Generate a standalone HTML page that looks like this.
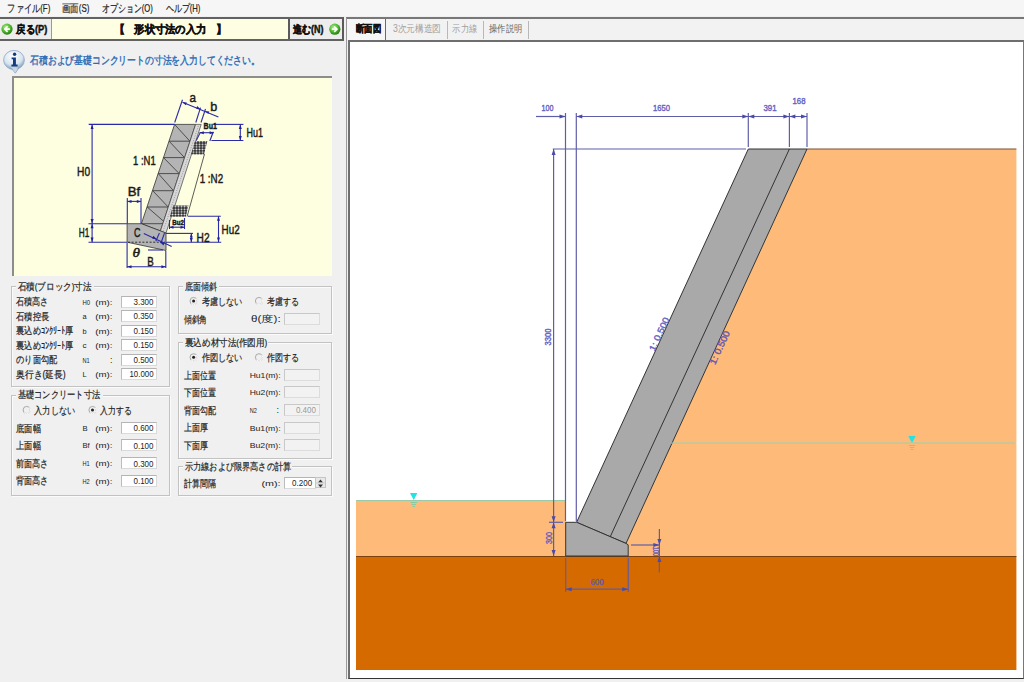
<!DOCTYPE html>
<html><head><meta charset="utf-8">
<style>
*{margin:0;padding:0;box-sizing:border-box}
html,body{width:1024px;height:682px;overflow:hidden;background:#F0F0F0;font-family:"Liberation Sans",sans-serif;font-size:11px;color:#222;position:relative}
.a{position:absolute}
.gb{position:absolute;border:1px solid #C2C2C2;box-shadow:1px 1px 0 #FBFBFB inset, 1px 1px 0 #FBFBFB}
.gbt{position:absolute;top:-2px;height:3px;background:#F0F0F0}
.inp{position:absolute;background:#fff;border:1px solid #DADADA;border-top-color:#B4B4B4;border-left-color:#BCBCBC;height:12px}
.dis{background:#F2F2F2;border-color:#DCDCDC;border-top-color:#C8C8C8;border-left-color:#C8C8C8}
</style></head><body>
<div class="a" style="left:0;top:0;width:1024px;height:16px;background:#F6F6F6"></div>
<div class="a" style="left:0;top:17px;width:344px;height:24px;border-top:2px solid #626262;border-bottom:2px solid #626262;border-right:2px solid #5A5A5A;background:#EDEDED"></div>
<div class="a" style="left:51px;top:19px;width:239px;height:20px;background:#FEFEE2;border-left:1px solid #9A9A9A;border-right:2px solid #5A5A5A"></div>
<div class="a" style="left:346px;top:17px;width:678px;height:662px;border-top:2px solid #787878;border-left:1px solid #9A9A9A;background:#F0F0F0"></div>
<div class="a" style="left:347px;top:19px;width:677px;height:21px;background:#F2F2F2"></div>
<div class="a" style="left:347px;top:19px;width:39px;height:21px;background:#F6F6F6;border-right:1px solid #6A6A6A"></div>
<div class="a" style="left:447px;top:21px;width:1px;height:18px;background:#B8B8B8"></div>
<div class="a" style="left:483px;top:21px;width:1px;height:18px;background:#B8B8B8"></div>
<div class="a" style="left:528px;top:21px;width:1px;height:18px;background:#B8B8B8"></div>
<div class="a" style="left:348px;top:40px;width:676px;height:639px;background:#fff;border-left:2px solid #6E6E6E;border-top:2px solid #6E6E6E;border-bottom:1px solid #333;border-right:1px solid #777"></div>
<div class="a" style="left:12px;top:76px;width:320px;height:200px;background:#FEFEE0;border-top:2px solid #8D8D8D;border-left:2px solid #8D8D8D"></div>
<div class="gb" style="left:11px;top:286px;width:159px;height:101px"><div class="gbt" style="left:3.5px;width:78.5px"></div></div>
<div class="gb" style="left:11px;top:395px;width:159px;height:101px"><div class="gbt" style="left:3.5px;width:87px"></div></div>
<div class="gb" style="left:178px;top:286px;width:154px;height:48px"><div class="gbt" style="left:3.5px;width:36.5px"></div></div>
<div class="gb" style="left:178px;top:342px;width:154px;height:117px"><div class="gbt" style="left:3.5px;width:85px"></div></div>
<div class="gb" style="left:178px;top:466px;width:154px;height:30px"><div class="gbt" style="left:3.5px;width:109px"></div></div>
<div class="inp" style="left:120.5px;top:295.5px;width:36px"></div>
<div class="inp" style="left:120.5px;top:310.0px;width:36px"></div>
<div class="inp" style="left:120.5px;top:324.5px;width:36px"></div>
<div class="inp" style="left:120.5px;top:339.0px;width:36px"></div>
<div class="inp" style="left:120.5px;top:353.5px;width:36px"></div>
<div class="inp" style="left:120.5px;top:368.0px;width:36px"></div>
<div class="inp" style="left:120.5px;top:422.0px;width:36px"></div>
<div class="inp" style="left:120.5px;top:439.4px;width:36px"></div>
<div class="inp" style="left:120.5px;top:457.3px;width:36px"></div>
<div class="inp" style="left:120.5px;top:474.5px;width:36px"></div>
<div class="inp dis" style="left:283.5px;top:313.2px;width:36px"></div>
<div class="inp dis" style="left:283.5px;top:368.9px;width:36px"></div>
<div class="inp dis" style="left:283.5px;top:386.4px;width:36px"></div>
<div class="inp dis" style="left:283.5px;top:404.0px;width:36px"></div>
<div class="inp dis" style="left:283.5px;top:421.5px;width:36px"></div>
<div class="inp dis" style="left:283.5px;top:439.0px;width:36px"></div>
<div class="inp" style="left:283.5px;top:477px;width:32px"></div>
<div class="a" style="left:315.3px;top:477px;width:10.5px;height:11px;background:#E8E8E8;border:1px solid #C4C4C4"></div>
<svg class="a" style="left:0;top:0" width="1024" height="682" viewBox="0 0 1024 682">
<defs>
<radialGradient id="gg" cx="40%" cy="35%" r="65%"><stop offset="0" stop-color="#B8F08A"/><stop offset=".6" stop-color="#4CB82E"/><stop offset="1" stop-color="#2A7A18"/></radialGradient>
<radialGradient id="ig" cx="45%" cy="30%" r="70%"><stop offset="0" stop-color="#FFFFFF"/><stop offset=".65" stop-color="#D8E4F0"/><stop offset="1" stop-color="#7A9CC0"/></radialGradient>
</defs>
<!-- icons -->
<g transform="translate(0.5,22.6)"><circle cx="6.5" cy="6.5" r="5.6" fill="url(#gg)"/><path d="M8.8 6.5H4.6M6.6 4.3L4.3 6.5L6.6 8.7" stroke="#fff" stroke-width="1.7" fill="none" stroke-linecap="round" stroke-linejoin="round"/></g>
<g transform="translate(328.3,22.7)"><circle cx="6.5" cy="6.5" r="5.6" fill="url(#gg)"/><path d="M4.2 6.5H8.4M6.4 4.3L8.7 6.5L6.4 8.7" stroke="#fff" stroke-width="1.7" fill="none" stroke-linecap="round" stroke-linejoin="round"/></g>
<g><path d="M10 66.5L15.3 73.2L19 67.8Z" fill="#C8D6E6" stroke="#8BA6C4" stroke-width=".8"/><ellipse cx="14" cy="60" rx="10.4" ry="9.6" fill="url(#ig)" stroke="#8BA6C4" stroke-width=".8"/><path d="M11 67L15.3 72.2L18.2 67.5Z" fill="#C8D6E6"/><circle cx="14.6" cy="54.2" r="1.7" fill="#143A80"/><path d="M11.6 57.4h4.3v7.2h1.7v1.9h-6.2v-1.9h1.6v-5.3h-1.4z" fill="#143A80"/></g>
<!-- spinner arrows -->
<path d="M318 482.5h5l-2.5-3z M318 484.5h5l-2.5 3z" fill="#333"/>
<line x1="315.5" y1="482.9" x2="325.5" y2="482.9" stroke="#C8C8C8" stroke-width="0.8"/>
<circle cx="26.7" cy="410" r="3.6" fill="none" stroke="#A0A0A0" stroke-width="0.9"/>
<path d="M29.3 407.4A3.6 3.6 0 0 1 24.099999999999998 412.6" fill="none" stroke="#FFFFFF" stroke-width="1"/>
<circle cx="92.5" cy="410" r="3.6" fill="none" stroke="#A0A0A0" stroke-width="0.9"/>
<path d="M95.1 407.4A3.6 3.6 0 0 1 89.9 412.6" fill="none" stroke="#FFFFFF" stroke-width="1"/>
<circle cx="92.5" cy="410" r="1.5" fill="#222"/>
<circle cx="193.6" cy="301" r="3.6" fill="none" stroke="#A0A0A0" stroke-width="0.9"/>
<path d="M196.2 298.4A3.6 3.6 0 0 1 191.0 303.6" fill="none" stroke="#FFFFFF" stroke-width="1"/>
<circle cx="193.6" cy="301" r="1.5" fill="#222"/>
<circle cx="259" cy="301" r="3.6" fill="none" stroke="#A0A0A0" stroke-width="0.9"/>
<path d="M261.6 298.4A3.6 3.6 0 0 1 256.4 303.6" fill="none" stroke="#FFFFFF" stroke-width="1"/>
<circle cx="193.6" cy="357.3" r="3.6" fill="none" stroke="#A0A0A0" stroke-width="0.9"/>
<path d="M196.2 354.7A3.6 3.6 0 0 1 191.0 359.90000000000003" fill="none" stroke="#FFFFFF" stroke-width="1"/>
<circle cx="193.6" cy="357.3" r="1.5" fill="#222"/>
<circle cx="259" cy="357.3" r="3.6" fill="none" stroke="#A0A0A0" stroke-width="0.9"/>
<path d="M261.6 354.7A3.6 3.6 0 0 1 256.4 359.90000000000003" fill="none" stroke="#FFFFFF" stroke-width="1"/>
<g id="left">
 <!-- block (stone masonry) -->
 <polygon points="174.6,124.4 195.6,124.4 160.4,231 141.4,223.7" fill="#B4B4B4" stroke="#333" stroke-width="0.8"/>
 <line x1="141.4" y1="223.7" x2="163" y2="223.7" stroke="#333" stroke-width="0.8"/>
 <g stroke="#333" stroke-width="0.8">
  <line x1="169.1" y1="141.2" x2="189.9" y2="141.2"/>
  <line x1="163.5" y1="157.6" x2="184.5" y2="157.6"/>
  <line x1="158.3" y1="173.6" x2="179.2" y2="173.6"/>
  <line x1="152.7" y1="190.7" x2="173.5" y2="190.7"/>
  <line x1="147.2" y1="207" x2="168.2" y2="207"/>
  <line x1="174.6" y1="124.4" x2="189.9" y2="141.2"/>
  <line x1="169.1" y1="141.2" x2="184.5" y2="157.6"/>
  <line x1="163.5" y1="157.6" x2="179.2" y2="173.6"/>
  <line x1="158.3" y1="173.6" x2="173.5" y2="190.7"/>
  <line x1="152.7" y1="190.7" x2="168.2" y2="207"/>
  <line x1="147.2" y1="207" x2="166.4" y2="223.7"/>
 </g>
 <!-- backfill concrete strip b -->
 <polygon points="195.6,124.4 201.2,124.4 166,233 160.4,231" fill="#D8D8D8" stroke="#444" stroke-width="0.7"/>
 <line x1="198.4" y1="126" x2="163.2" y2="231" stroke="#888" stroke-width="0.8" stroke-dasharray="1,1.5"/>
 <!-- footing -->
 <polygon points="127.1,223.7 141.4,223.7 166,233 166,250.5 127.1,242.2" fill="#B4B4B4" stroke="#333" stroke-width="0.8"/>
 <line x1="128" y1="242.2" x2="165" y2="242.2" stroke="#222" stroke-width="0.9" stroke-dasharray="2,1.6"/>
 <!-- backfill gravel -->
 <defs><pattern id="grv" patternUnits="userSpaceOnUse" width="3" height="2.6"><rect width="3" height="2.6" fill="#2A2A2A"/><ellipse cx="1.5" cy="1.3" rx="1.05" ry="0.8" fill="#E0E0E0"/></pattern></defs>
 <polygon points="195,141 207.4,141 204,154.6 191,154.6" fill="url(#grv)"/>
 <polygon points="173,205.5 188.5,205.5 185.8,216.8 169.8,216.8" fill="url(#grv)"/>
 <!-- N2 line -->
 <line x1="204.5" y1="154" x2="187.1" y2="216.5" stroke="#333" stroke-width="0.8"/>
 <!-- dimension lines -->
 <g stroke="#2A2AA8" stroke-width="1.1" fill="none">
  <line x1="88.7" y1="124.4" x2="174.6" y2="124.4"/>
  <line x1="92.1" y1="124.4" x2="92.1" y2="242.2"/>
  <line x1="88.5" y1="223.7" x2="127" y2="223.7"/>
  <line x1="88.5" y1="242.2" x2="127" y2="242.2"/>
  <line x1="165.8" y1="242.2" x2="221.2" y2="242.2"/>
  <line x1="165.8" y1="233.4" x2="193" y2="233.4"/>
  <line x1="191.3" y1="233.4" x2="191.3" y2="242.2"/>
  <line x1="188" y1="216.2" x2="220.8" y2="216.2"/>
  <line x1="218.5" y1="216.2" x2="218.5" y2="242.2"/>
  <line x1="213.75" y1="124.4" x2="243.4" y2="124.4"/>
  <line x1="211.4" y1="140.5" x2="243.4" y2="140.5"/>
  <line x1="240.3" y1="124.4" x2="240.3" y2="140.5"/>
  <line x1="127.3" y1="198" x2="127.3" y2="223.7"/>
  <line x1="141" y1="198" x2="141" y2="223.7"/>
  <line x1="127.3" y1="201.4" x2="141" y2="201.4"/>
  <line x1="127.1" y1="243" x2="127.1" y2="268"/>
  <line x1="165.8" y1="251" x2="165.8" y2="268"/>
  <line x1="127.1" y1="266.8" x2="165.8" y2="266.8"/>
  <line x1="174.7" y1="122.5" x2="182.5" y2="99.8"/>
  <line x1="195.8" y1="122.5" x2="200.5" y2="107.7"/>
  <line x1="201" y1="122.5" x2="205.5" y2="109"/>
  <line x1="182.5" y1="102.2" x2="218.4" y2="117"/>
  <line x1="199.7" y1="132.7" x2="213.75" y2="132.7"/>
  <line x1="213.3" y1="131.8" x2="209.8" y2="141"/>
  <line x1="200.4" y1="132.3" x2="196.3" y2="140.5"/>
  <line x1="169.5" y1="227.2" x2="184.5" y2="227.2"/>
  <line x1="169.5" y1="220" x2="169.5" y2="229"/>
  <line x1="184.5" y1="218" x2="184.5" y2="229"/>
  <line x1="143.8" y1="233.4" x2="171.7" y2="246.4"/>
  <line x1="159.4" y1="233" x2="155.8" y2="241.3"/>
  <line x1="164.5" y1="233" x2="160.9" y2="243.3"/>
  
  <line x1="148" y1="250" x2="163" y2="250"/>
 </g>
 <g fill="#2020A0">
  <polygon points="92.1,124.4 90.6,129 93.6,129"/>
  <polygon points="92.1,223.7 90.6,219 93.6,219"/>
  <polygon points="92.1,223.7 90.6,228.3 93.6,228.3"/>
  <polygon points="92.1,242.2 90.6,237.6 93.6,237.6"/>
  <polygon points="240.3,124.4 238.8,129 241.8,129"/>
  <polygon points="240.3,140.5 238.8,136 241.8,136"/>
  <polygon points="218.5,216.2 217,220.8 220,220.8"/>
  <polygon points="218.5,242.2 217,237.6 220,237.6"/>
  <polygon points="191.3,233.4 189.8,237.6 192.8,237.6"/>
  <polygon points="191.3,242.2 189.8,238 192.8,238"/>
  <polygon points="127.3,201.4 131.5,199.9 131.5,202.9"/>
  <polygon points="141,201.4 136.8,199.9 136.8,202.9"/>
  <polygon points="127.1,266.8 131.5,265.3 131.5,268.3"/>
  <polygon points="165.8,266.8 161.4,265.3 161.4,268.3"/>
  <polygon points="199.7,132.7 203.8,131.2 203.8,134.2"/>
  <polygon points="213.75,132.7 209.6,131.2 209.6,134.2"/>
  <polygon points="169.5,227.2 173.5,225.7 173.5,228.7"/>
  <polygon points="184.5,227.2 180.5,225.7 180.5,228.7"/>
  <polygon points="182.5,102.2 186.8,102.6 185.8,105.3"/>
  <polygon points="200.5,109.2 196.2,108.8 197.2,106.1"/>
  <polygon points="205,111 209.3,111.4 208.3,114.1"/>
  <polygon points="157,239.4 152.2,238.4 153.4,235.7"/>
  <polygon points="159.8,241.8 164.6,242.8 163.4,245.5"/>
 </g>
 <g font-family="Liberation Sans, sans-serif" fill="#1A1A1A" stroke="#1A1A1A" stroke-width="0.45">
  <text x="77.1" y="175.6" font-size="13" textLength="13" lengthAdjust="spacingAndGlyphs">H0</text>
  <text x="78.8" y="236.7" font-size="13" textLength="10.5" lengthAdjust="spacingAndGlyphs">H1</text>
  <text x="133.1" y="164.7" font-size="13" textLength="22.6" lengthAdjust="spacingAndGlyphs">1 :N1</text>
  <text x="199.7" y="183" font-size="13" textLength="23.4" lengthAdjust="spacingAndGlyphs">1 :N2</text>
  <text x="127.8" y="196.2" font-size="13" textLength="12.5" lengthAdjust="spacingAndGlyphs">Bf</text>
  <text x="246.6" y="136.7" font-size="13" textLength="16.4" lengthAdjust="spacingAndGlyphs">Hu1</text>
  <text x="221.6" y="233.9" font-size="13" textLength="18" lengthAdjust="spacingAndGlyphs">Hu2</text>
  <text x="196.6" y="242.3" font-size="13" textLength="13" lengthAdjust="spacingAndGlyphs">H2</text>
  <text x="147.3" y="265.6" font-size="13" textLength="6.5" lengthAdjust="spacingAndGlyphs">B</text>
  <text x="134" y="236.9" font-size="13" textLength="6.5" lengthAdjust="spacingAndGlyphs">C</text>
  <text x="189.5" y="102" font-size="13" textLength="6.5" lengthAdjust="spacingAndGlyphs">a</text>
  <text x="210.2" y="111" font-size="13" textLength="7" lengthAdjust="spacingAndGlyphs">b</text>
  <text x="132.4" y="257.2" font-size="12" font-style="italic" font-family="Liberation Serif, serif" textLength="7.5" lengthAdjust="spacingAndGlyphs">θ</text>
  <text x="203.6" y="128.8" font-size="9" font-weight="bold" textLength="13.3" lengthAdjust="spacingAndGlyphs">Bu1</text>
  <text x="172.3" y="224.8" font-size="7" font-weight="bold" textLength="11.7" lengthAdjust="spacingAndGlyphs">Bu2</text>
 </g>
</g>

<!-- right drawing -->
<g id="right">
 <!-- light orange: left of wall below water, and right of wall -->
 <rect x="356" y="500" width="210" height="57" fill="#FDBA78"/>
 <polygon points="807,149 1016.4,149 1016.4,557 628.2,557 628.2,544.8 626,543.4" fill="#FDBA78"/>
 <rect x="356" y="556.5" width="660.4" height="113.5" fill="#D46A00"/>
 <line x1="356" y1="556.5" x2="1016.4" y2="556.5" stroke="#7A400F" stroke-width="1.2"/>
 <line x1="807" y1="149" x2="1016.4" y2="149" stroke="#7A5030" stroke-width="1.2"/>
 <!-- wall -->
 <polygon points="748.3,149 807,149 626,543.4 576.6,522.3" fill="#A9A9A9" stroke="#333" stroke-width="1"/>
 <line x1="789.4" y1="149" x2="610" y2="537.2" stroke="#333" stroke-width="1"/>
 <!-- footing -->
 <polygon points="565.7,522.3 576.6,522.3 626,543.4 628.2,544.8 628.2,556 565.7,556" fill="#A9A9A9" stroke="#333" stroke-width="1"/>
 <!-- water lines -->
 <line x1="356" y1="500.5" x2="566" y2="500.5" stroke="#8CCCB0" stroke-width="0.9"/>
 <line x1="671" y1="443" x2="1015" y2="443" stroke="#8CD4B4" stroke-width="0.9"/>
 <polygon points="410,493 417.4,493 413.7,500" fill="#22E2E2"/>
 <line x1="410.5" y1="502.5" x2="417" y2="502.5" stroke="#8FC8A0" stroke-width="1"/>
 <line x1="411.5" y1="504.5" x2="416" y2="504.5" stroke="#8FC8A0" stroke-width="1"/>
 <line x1="412.5" y1="506.5" x2="415" y2="506.5" stroke="#8FC8A0" stroke-width="1"/>
 <polygon points="908.3,436 915.7,436 912,443" fill="#22E2E2"/>
 <line x1="908.8" y1="445.5" x2="915.3" y2="445.5" stroke="#8FC8A0" stroke-width="1"/>
 <line x1="909.8" y1="447.5" x2="914.3" y2="447.5" stroke="#8FC8A0" stroke-width="1"/>
 <line x1="910.8" y1="449.5" x2="913.3" y2="449.5" stroke="#8FC8A0" stroke-width="1"/>
 <!-- dimension lines -->
 <g stroke="#5E5EA8" stroke-width="1.2" fill="none">
  <line x1="536" y1="116.5" x2="565.5" y2="116.5"/>
  <line x1="576.3" y1="116.5" x2="807" y2="116.5"/>
  <line x1="565.5" y1="113" x2="565.5" y2="521"/>
  <line x1="576.3" y1="113" x2="576.3" y2="521"/>
  <line x1="748.3" y1="113" x2="748.3" y2="147"/>
  <line x1="789.4" y1="113" x2="789.4" y2="147"/>
  <line x1="807" y1="113" x2="807" y2="147"/>
  <line x1="552.8" y1="149" x2="746" y2="149"/>
  <line x1="553.6" y1="149" x2="553.6" y2="556"/>
  <line x1="549" y1="522.3" x2="563" y2="522.3"/>
  <line x1="565.7" y1="558" x2="565.7" y2="592"/>
  <line x1="628.2" y1="558" x2="628.2" y2="592"/>
  <line x1="565.7" y1="589.2" x2="628.2" y2="589.2"/>
  <line x1="631" y1="545" x2="660" y2="545"/>
  <line x1="659.4" y1="529" x2="659.4" y2="572.4"/>
 </g>
 <g fill="#4A4AA8">
  <polygon points="565.5,116.5 559.5,114.5 559.5,118.5"/>
  <polygon points="576.3,116.5 582.3,114.5 582.3,118.5"/>
  <polygon points="748.3,116.5 742.3,114.5 742.3,118.5"/>
  <polygon points="748.3,116.5 754.3,114.5 754.3,118.5"/>
  <polygon points="789.4,116.5 783.4,114.5 783.4,118.5"/>
  <polygon points="789.4,116.5 795.4,114.5 795.4,118.5"/>
  <polygon points="807.0,116.5 801.0,114.5 801.0,118.5"/>
  <polygon points="553.6,149.0 551.6,155.0 555.6,155.0"/>
  <polygon points="553.6,522.3 551.6,516.3 555.6,516.3"/>
  <polygon points="553.6,522.3 551.6,528.3 555.6,528.3"/>
  <polygon points="553.6,556.0 551.6,550.0 555.6,550.0"/>
  <polygon points="565.7,589.2 571.7,587.2 571.7,591.2"/>
  <polygon points="628.2,589.2 622.2,587.2 622.2,591.2"/>
  <polygon points="659.4,545.0 657.4,539.0 661.4,539.0"/>
  <polygon points="659.4,556.0 657.4,562.0 661.4,562.0"/>
  <polygon points="659.4,545.0 653.4,543.0 653.4,547.0"/>
 </g>
 <line x1="659.4" y1="556" x2="680" y2="556" stroke="#6B3A10" stroke-width="0"/>
 <g font-family="Liberation Sans, sans-serif" font-size="9" fill="#6464C4" stroke="#6464C4" stroke-width="0.4" text-anchor="middle">
  <text x="547.5" y="111" textLength="12" lengthAdjust="spacingAndGlyphs">100</text>
  <text x="661.6" y="111" textLength="17" lengthAdjust="spacingAndGlyphs">1650</text>
  <text x="770" y="111" textLength="13" lengthAdjust="spacingAndGlyphs">391</text>
  <text x="799" y="104" textLength="13" lengthAdjust="spacingAndGlyphs">168</text>
  <text x="597" y="584.5" textLength="13" lengthAdjust="spacingAndGlyphs" fill="#6A3C8A">600</text>
  <text transform="translate(551,337) rotate(-90)" x="0" y="0" textLength="17" lengthAdjust="spacingAndGlyphs">3300</text>
  <text transform="translate(551.5,538) rotate(-90)" x="0" y="0" textLength="12" lengthAdjust="spacingAndGlyphs" fill="#6A50A8">300</text>
  <text transform="translate(652.5,551.5) rotate(90)" x="0" y="0" textLength="9.5" lengthAdjust="spacingAndGlyphs" fill="#6A3C8A">100</text>
  <text transform="translate(662,335.5) rotate(-65)" x="0" y="0" textLength="36" lengthAdjust="spacingAndGlyphs">1: 0.500</text>
  <text transform="translate(722.5,349) rotate(-65)" x="0" y="0" textLength="36" lengthAdjust="spacingAndGlyphs" fill="#6A3C8A">1: 0.500</text>
 </g>
</g>

<g>
<text x="7.3" y="12.0" font-size="10.5" font-weight="normal" fill="#222" font-family="Liberation Sans, sans-serif" textLength="43.0" lengthAdjust="spacingAndGlyphs" stroke="#222" stroke-width="0.2">ファイル(F)</text>
<text x="62.0" y="12.0" font-size="10.5" font-weight="normal" fill="#222" font-family="Liberation Sans, sans-serif" textLength="27.4" lengthAdjust="spacingAndGlyphs" stroke="#222" stroke-width="0.2">画面(S)</text>
<text x="101.7" y="12.0" font-size="10.5" font-weight="normal" fill="#222" font-family="Liberation Sans, sans-serif" textLength="51.1" lengthAdjust="spacingAndGlyphs" stroke="#222" stroke-width="0.2">オプション(O)</text>
<text x="165.5" y="12.0" font-size="10.5" font-weight="normal" fill="#222" font-family="Liberation Sans, sans-serif" textLength="34.9" lengthAdjust="spacingAndGlyphs" stroke="#222" stroke-width="0.2">ヘルプ(H)</text>
<text x="16.4" y="33.4" font-size="11" font-weight="bold" fill="#111" font-family="Liberation Sans, sans-serif" textLength="30.9" lengthAdjust="spacingAndGlyphs" stroke="#111" stroke-width="0.45">戻る(P)</text>
<text x="114.0" y="33.4" font-size="11" font-weight="bold" fill="#111" font-family="Liberation Sans, sans-serif" textLength="11.0" lengthAdjust="spacingAndGlyphs" stroke="#111" stroke-width="0.45">【</text>
<text x="134.2" y="33.4" font-size="11" font-weight="bold" fill="#111" font-family="Liberation Sans, sans-serif" textLength="72.2" lengthAdjust="spacingAndGlyphs" stroke="#111" stroke-width="0.45">形状寸法の入力</text>
<text x="216.0" y="33.4" font-size="11" font-weight="bold" fill="#111" font-family="Liberation Sans, sans-serif" textLength="11.0" lengthAdjust="spacingAndGlyphs" stroke="#111" stroke-width="0.45">】</text>
<text x="293.0" y="33.4" font-size="11" font-weight="bold" fill="#111" font-family="Liberation Sans, sans-serif" textLength="30.4" lengthAdjust="spacingAndGlyphs" stroke="#111" stroke-width="0.45">進む(N)</text>
<text x="30.0" y="64.4" font-size="10.5" font-weight="normal" fill="#2468B4" font-family="Liberation Sans, sans-serif" textLength="229.8" lengthAdjust="spacingAndGlyphs" stroke="#2468B4" stroke-width="0.35">石積および基礎コンクリートの寸法を入力してください。</text>
<text x="356.0" y="32.1" font-size="10" font-weight="bold" fill="#111" font-family="Liberation Sans, sans-serif" textLength="24.9" lengthAdjust="spacingAndGlyphs" stroke="#111" stroke-width="0.45">断面図</text>
<text x="392.9" y="32.1" font-size="10" font-weight="normal" fill="#A0A0A0" font-family="Liberation Sans, sans-serif" textLength="48.3" lengthAdjust="spacingAndGlyphs">3次元構造図</text>
<text x="452.4" y="32.1" font-size="10" font-weight="normal" fill="#A0A0A0" font-family="Liberation Sans, sans-serif" textLength="24.7" lengthAdjust="spacingAndGlyphs">示力線</text>
<text x="489.0" y="32.1" font-size="10" font-weight="normal" fill="#666" font-family="Liberation Sans, sans-serif" textLength="33.0" lengthAdjust="spacingAndGlyphs">操作説明</text>
<text x="17.7" y="289.8" font-size="9.5" font-weight="normal" fill="#222" font-family="Liberation Sans, sans-serif" textLength="73.8" lengthAdjust="spacingAndGlyphs" stroke="#222" stroke-width="0.2">石積(ブロック)寸法</text>
<text x="17.7" y="398.4" font-size="9.5" font-weight="normal" fill="#222" font-family="Liberation Sans, sans-serif" textLength="82.4" lengthAdjust="spacingAndGlyphs" stroke="#222" stroke-width="0.2">基礎コンクリート寸法</text>
<text x="184.9" y="289.8" font-size="9.5" font-weight="normal" fill="#222" font-family="Liberation Sans, sans-serif" textLength="31.8" lengthAdjust="spacingAndGlyphs" stroke="#222" stroke-width="0.2">底面傾斜</text>
<text x="184.9" y="345.8" font-size="9.5" font-weight="normal" fill="#222" font-family="Liberation Sans, sans-serif" textLength="82.4" lengthAdjust="spacingAndGlyphs" stroke="#222" stroke-width="0.2">裏込め材寸法(作図用)</text>
<text x="184.9" y="470.0" font-size="9.5" font-weight="normal" fill="#222" font-family="Liberation Sans, sans-serif" textLength="106.2" lengthAdjust="spacingAndGlyphs" stroke="#222" stroke-width="0.2">示力線および限界高さの計算</text>
<text x="16.2" y="305.3" font-size="10" font-weight="normal" fill="#222" font-family="Liberation Sans, sans-serif" textLength="32.4" lengthAdjust="spacingAndGlyphs" stroke="#222" stroke-width="0.2">石積高さ</text>
<text x="82.4" y="304.5" font-size="8" font-weight="normal" fill="#222" font-family="Liberation Sans, sans-serif" textLength="7.6" lengthAdjust="spacingAndGlyphs">H0</text>
<text x="95.3" y="304.5" font-size="8" font-weight="normal" fill="#222" font-family="Liberation Sans, sans-serif" textLength="17.2" lengthAdjust="spacingAndGlyphs">(m):</text>
<text x="133.5" y="304.9" font-size="9" font-weight="normal" fill="#222" font-family="Liberation Sans, sans-serif" textLength="20.0" lengthAdjust="spacingAndGlyphs">3.300</text>
<text x="16.2" y="319.8" font-size="10" font-weight="normal" fill="#222" font-family="Liberation Sans, sans-serif" textLength="33.0" lengthAdjust="spacingAndGlyphs" stroke="#222" stroke-width="0.2">石積控長</text>
<text x="82.4" y="319.0" font-size="8" font-weight="normal" fill="#222" font-family="Liberation Sans, sans-serif" textLength="4.1" lengthAdjust="spacingAndGlyphs">a</text>
<text x="95.3" y="319.0" font-size="8" font-weight="normal" fill="#222" font-family="Liberation Sans, sans-serif" textLength="17.2" lengthAdjust="spacingAndGlyphs">(m):</text>
<text x="133.5" y="319.4" font-size="9" font-weight="normal" fill="#222" font-family="Liberation Sans, sans-serif" textLength="20.0" lengthAdjust="spacingAndGlyphs">0.350</text>
<text x="16.2" y="334.3" font-size="10" font-weight="normal" fill="#222" font-family="Liberation Sans, sans-serif" textLength="57.2" lengthAdjust="spacingAndGlyphs" stroke="#222" stroke-width="0.2">裏込めｺﾝｸﾘｰﾄ厚</text>
<text x="82.4" y="333.5" font-size="8" font-weight="normal" fill="#222" font-family="Liberation Sans, sans-serif" textLength="4.1" lengthAdjust="spacingAndGlyphs">b</text>
<text x="95.3" y="333.5" font-size="8" font-weight="normal" fill="#222" font-family="Liberation Sans, sans-serif" textLength="17.2" lengthAdjust="spacingAndGlyphs">(m):</text>
<text x="133.5" y="333.9" font-size="9" font-weight="normal" fill="#222" font-family="Liberation Sans, sans-serif" textLength="20.0" lengthAdjust="spacingAndGlyphs">0.150</text>
<text x="16.2" y="348.8" font-size="10" font-weight="normal" fill="#222" font-family="Liberation Sans, sans-serif" textLength="57.2" lengthAdjust="spacingAndGlyphs" stroke="#222" stroke-width="0.2">裏込めｺﾝｸﾘｰﾄ厚</text>
<text x="82.4" y="348.0" font-size="8" font-weight="normal" fill="#222" font-family="Liberation Sans, sans-serif" textLength="4.1" lengthAdjust="spacingAndGlyphs">c</text>
<text x="95.3" y="348.0" font-size="8" font-weight="normal" fill="#222" font-family="Liberation Sans, sans-serif" textLength="17.2" lengthAdjust="spacingAndGlyphs">(m):</text>
<text x="133.5" y="348.4" font-size="9" font-weight="normal" fill="#222" font-family="Liberation Sans, sans-serif" textLength="20.0" lengthAdjust="spacingAndGlyphs">0.150</text>
<text x="16.2" y="363.3" font-size="10" font-weight="normal" fill="#222" font-family="Liberation Sans, sans-serif" textLength="41.0" lengthAdjust="spacingAndGlyphs" stroke="#222" stroke-width="0.2">のり面勾配</text>
<text x="82.4" y="362.5" font-size="8" font-weight="normal" fill="#222" font-family="Liberation Sans, sans-serif" textLength="7.2" lengthAdjust="spacingAndGlyphs">N1</text>
<text x="110.0" y="362.9" font-size="9" font-weight="normal" fill="#222" font-family="Liberation Sans, sans-serif" textLength="2.5" lengthAdjust="spacingAndGlyphs">:</text>
<text x="133.5" y="362.9" font-size="9" font-weight="normal" fill="#222" font-family="Liberation Sans, sans-serif" textLength="20.0" lengthAdjust="spacingAndGlyphs">0.500</text>
<text x="16.2" y="377.8" font-size="10" font-weight="normal" fill="#222" font-family="Liberation Sans, sans-serif" textLength="49.6" lengthAdjust="spacingAndGlyphs" stroke="#222" stroke-width="0.2">奥行き(延長)</text>
<text x="82.4" y="377.0" font-size="8" font-weight="normal" fill="#222" font-family="Liberation Sans, sans-serif" textLength="4.1" lengthAdjust="spacingAndGlyphs">L</text>
<text x="95.3" y="377.0" font-size="8" font-weight="normal" fill="#222" font-family="Liberation Sans, sans-serif" textLength="17.2" lengthAdjust="spacingAndGlyphs">(m):</text>
<text x="129.5" y="377.4" font-size="9" font-weight="normal" fill="#222" font-family="Liberation Sans, sans-serif" textLength="24.0" lengthAdjust="spacingAndGlyphs">10.000</text>
<text x="16.2" y="431.8" font-size="10" font-weight="normal" fill="#222" font-family="Liberation Sans, sans-serif" textLength="24.8" lengthAdjust="spacingAndGlyphs" stroke="#222" stroke-width="0.2">底面幅</text>
<text x="82.4" y="431.0" font-size="8" font-weight="normal" fill="#222" font-family="Liberation Sans, sans-serif" textLength="5.1" lengthAdjust="spacingAndGlyphs">B</text>
<text x="95.3" y="431.0" font-size="8" font-weight="normal" fill="#222" font-family="Liberation Sans, sans-serif" textLength="17.2" lengthAdjust="spacingAndGlyphs">(m):</text>
<text x="133.5" y="431.4" font-size="9" font-weight="normal" fill="#222" font-family="Liberation Sans, sans-serif" textLength="20.0" lengthAdjust="spacingAndGlyphs">0.600</text>
<text x="16.2" y="449.2" font-size="10" font-weight="normal" fill="#222" font-family="Liberation Sans, sans-serif" textLength="24.8" lengthAdjust="spacingAndGlyphs" stroke="#222" stroke-width="0.2">上面幅</text>
<text x="82.4" y="448.4" font-size="8" font-weight="normal" fill="#222" font-family="Liberation Sans, sans-serif" textLength="7.2" lengthAdjust="spacingAndGlyphs">Bf</text>
<text x="95.3" y="448.4" font-size="8" font-weight="normal" fill="#222" font-family="Liberation Sans, sans-serif" textLength="17.2" lengthAdjust="spacingAndGlyphs">(m):</text>
<text x="133.5" y="448.8" font-size="9" font-weight="normal" fill="#222" font-family="Liberation Sans, sans-serif" textLength="20.0" lengthAdjust="spacingAndGlyphs">0.100</text>
<text x="16.2" y="467.1" font-size="10" font-weight="normal" fill="#222" font-family="Liberation Sans, sans-serif" textLength="32.4" lengthAdjust="spacingAndGlyphs" stroke="#222" stroke-width="0.2">前面高さ</text>
<text x="82.4" y="466.3" font-size="8" font-weight="normal" fill="#222" font-family="Liberation Sans, sans-serif" textLength="7.2" lengthAdjust="spacingAndGlyphs">H1</text>
<text x="95.3" y="466.3" font-size="8" font-weight="normal" fill="#222" font-family="Liberation Sans, sans-serif" textLength="17.2" lengthAdjust="spacingAndGlyphs">(m):</text>
<text x="133.5" y="466.7" font-size="9" font-weight="normal" fill="#222" font-family="Liberation Sans, sans-serif" textLength="20.0" lengthAdjust="spacingAndGlyphs">0.300</text>
<text x="16.2" y="484.3" font-size="10" font-weight="normal" fill="#222" font-family="Liberation Sans, sans-serif" textLength="32.4" lengthAdjust="spacingAndGlyphs" stroke="#222" stroke-width="0.2">背面高さ</text>
<text x="82.4" y="483.5" font-size="8" font-weight="normal" fill="#222" font-family="Liberation Sans, sans-serif" textLength="7.2" lengthAdjust="spacingAndGlyphs">H2</text>
<text x="95.3" y="483.5" font-size="8" font-weight="normal" fill="#222" font-family="Liberation Sans, sans-serif" textLength="17.2" lengthAdjust="spacingAndGlyphs">(m):</text>
<text x="133.5" y="483.9" font-size="9" font-weight="normal" fill="#222" font-family="Liberation Sans, sans-serif" textLength="20.0" lengthAdjust="spacingAndGlyphs">0.100</text>
<text x="34.3" y="413.8" font-size="10" font-weight="normal" fill="#222" font-family="Liberation Sans, sans-serif" textLength="41.0" lengthAdjust="spacingAndGlyphs" stroke="#222" stroke-width="0.2">入力しない</text>
<text x="100.1" y="413.8" font-size="10" font-weight="normal" fill="#222" font-family="Liberation Sans, sans-serif" textLength="31.5" lengthAdjust="spacingAndGlyphs" stroke="#222" stroke-width="0.2">入力する</text>
<text x="201.5" y="304.8" font-size="10" font-weight="normal" fill="#222" font-family="Liberation Sans, sans-serif" textLength="41.0" lengthAdjust="spacingAndGlyphs" stroke="#222" stroke-width="0.2">考慮しない</text>
<text x="267.3" y="304.8" font-size="10" font-weight="normal" fill="#222" font-family="Liberation Sans, sans-serif" textLength="32.0" lengthAdjust="spacingAndGlyphs" stroke="#222" stroke-width="0.2">考慮する</text>
<text x="201.5" y="361.1" font-size="10" font-weight="normal" fill="#222" font-family="Liberation Sans, sans-serif" textLength="41.0" lengthAdjust="spacingAndGlyphs" stroke="#222" stroke-width="0.2">作図しない</text>
<text x="267.3" y="361.1" font-size="10" font-weight="normal" fill="#222" font-family="Liberation Sans, sans-serif" textLength="32.0" lengthAdjust="spacingAndGlyphs" stroke="#222" stroke-width="0.2">作図する</text>
<text x="183.7" y="323.0" font-size="10" font-weight="normal" fill="#222" font-family="Liberation Sans, sans-serif" textLength="23.5" lengthAdjust="spacingAndGlyphs" stroke="#222" stroke-width="0.2">傾斜角</text>
<text x="251.0" y="322.4" font-size="8.5" font-weight="normal" fill="#222" font-family="Liberation Sans, sans-serif" textLength="29.6" lengthAdjust="spacingAndGlyphs">θ(度):</text>
<text x="183.7" y="378.7" font-size="10" font-weight="normal" fill="#222" font-family="Liberation Sans, sans-serif" textLength="32.1" lengthAdjust="spacingAndGlyphs" stroke="#222" stroke-width="0.2">上面位置</text>
<text x="249.7" y="377.9" font-size="8" font-weight="normal" fill="#222" font-family="Liberation Sans, sans-serif" textLength="30.9" lengthAdjust="spacingAndGlyphs">Hu1(m):</text>
<text x="183.7" y="396.2" font-size="10" font-weight="normal" fill="#222" font-family="Liberation Sans, sans-serif" textLength="32.1" lengthAdjust="spacingAndGlyphs" stroke="#222" stroke-width="0.2">下面位置</text>
<text x="249.7" y="395.4" font-size="8" font-weight="normal" fill="#222" font-family="Liberation Sans, sans-serif" textLength="30.9" lengthAdjust="spacingAndGlyphs">Hu2(m):</text>
<text x="183.7" y="431.3" font-size="10" font-weight="normal" fill="#222" font-family="Liberation Sans, sans-serif" textLength="24.1" lengthAdjust="spacingAndGlyphs" stroke="#222" stroke-width="0.2">上面厚</text>
<text x="249.7" y="430.5" font-size="8" font-weight="normal" fill="#222" font-family="Liberation Sans, sans-serif" textLength="30.9" lengthAdjust="spacingAndGlyphs">Bu1(m):</text>
<text x="183.7" y="448.8" font-size="10" font-weight="normal" fill="#222" font-family="Liberation Sans, sans-serif" textLength="24.1" lengthAdjust="spacingAndGlyphs" stroke="#222" stroke-width="0.2">下面厚</text>
<text x="249.7" y="448.0" font-size="8" font-weight="normal" fill="#222" font-family="Liberation Sans, sans-serif" textLength="30.9" lengthAdjust="spacingAndGlyphs">Bu2(m):</text>
<text x="183.7" y="413.8" font-size="10" font-weight="normal" fill="#222" font-family="Liberation Sans, sans-serif" textLength="32.1" lengthAdjust="spacingAndGlyphs" stroke="#222" stroke-width="0.2">背面勾配</text>
<text x="249.7" y="413.0" font-size="8" font-weight="normal" fill="#222" font-family="Liberation Sans, sans-serif" textLength="7.1" lengthAdjust="spacingAndGlyphs">N2</text>
<text x="276.5" y="413.4" font-size="9" font-weight="normal" fill="#222" font-family="Liberation Sans, sans-serif" textLength="2.5" lengthAdjust="spacingAndGlyphs">:</text>
<text x="295.9" y="413.4" font-size="9" font-weight="normal" fill="#9A9A9A" font-family="Liberation Sans, sans-serif" textLength="20.0" lengthAdjust="spacingAndGlyphs">0.400</text>
<text x="183.7" y="486.8" font-size="10" font-weight="normal" fill="#222" font-family="Liberation Sans, sans-serif" textLength="32.1" lengthAdjust="spacingAndGlyphs" stroke="#222" stroke-width="0.2">計算間隔</text>
<text x="261.5" y="486.0" font-size="8" font-weight="normal" fill="#222" font-family="Liberation Sans, sans-serif" textLength="19.1" lengthAdjust="spacingAndGlyphs">(m):</text>
<text x="292.1" y="486.4" font-size="9" font-weight="normal" fill="#222" font-family="Liberation Sans, sans-serif" textLength="20.0" lengthAdjust="spacingAndGlyphs">0.200</text>
</g>
</svg>
</body></html>
